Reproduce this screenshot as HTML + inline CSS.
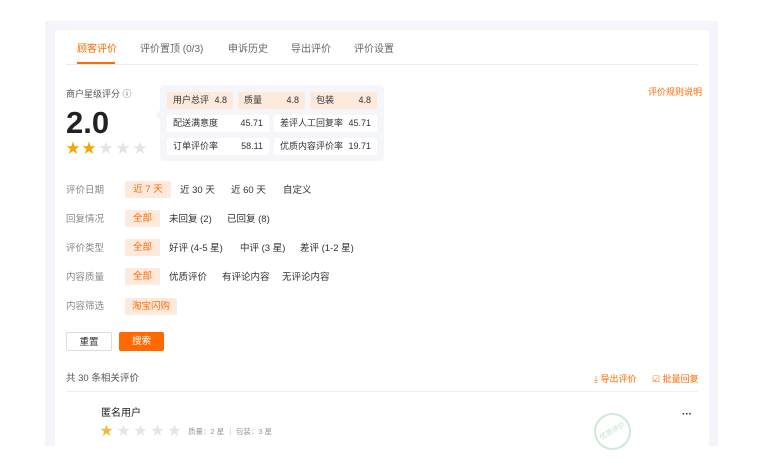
<!DOCTYPE html>
<html><head><meta charset="utf-8"><style>
*{margin:0;padding:0;box-sizing:border-box}
body{width:760px;height:468px;background:#fff;font-family:"Liberation Sans","Noto Sans CJK SC",sans-serif;position:relative;overflow:hidden;color:#333}
.abs{position:absolute}
.outer{left:45px;top:21px;width:673px;height:425px;background:#f4f5fa}
.card{left:55px;top:30px;width:654px;height:416px;background:#fff;border-radius:4px 4px 0 0}
.t{position:absolute;font-size:10px;line-height:12px;white-space:nowrap}
.chip{position:absolute;height:17px;border-radius:2px;font-size:9.5px;line-height:17px;text-align:center;white-space:nowrap}
.on{background:#fdeadd;color:#ff6a00}
.lbl{color:#888;font-size:9.5px}
.cell{position:absolute;height:17px;border-radius:2px;font-size:9px;line-height:17px;padding:0 6px;display:flex;justify-content:space-between;color:#333}
.star{position:absolute;font-size:14px;line-height:14px}
</style></head><body>
<div class="abs outer"></div>
<div class="abs card"></div>
<!-- tabs -->
<div class="t" style="left:77px;top:44px;color:#ff6a00">顾客评价</div>
<div class="abs" style="left:77px;top:62px;width:38px;height:2px;background:#ff6a00"></div>
<div class="t" style="left:140px;top:44px;color:#666">评价置顶 (0/3)</div>
<div class="t" style="left:228px;top:44px;color:#666">申诉历史</div>
<div class="t" style="left:291px;top:44px;color:#666">导出评价</div>
<div class="t" style="left:354px;top:44px;color:#666">评价设置</div>
<div class="abs" style="left:66px;top:64px;width:632px;height:1px;background:#ebebeb"></div>
<div class="t" style="left:648px;top:86px;color:#ff6a00;font-size:9px">评价规则说明</div>
<!-- score -->
<div class="t" style="left:66px;top:88px;color:#555;font-size:9px">商户星级评分 ⓘ</div>
<div class="t" style="left:66px;top:106px;font-size:31px;line-height:34px;font-weight:bold;color:#222">2.0</div>
<div class="star" style="left:66px;top:141px;color:#f7a500">★</div>
<div class="star" style="left:82px;top:141px;color:#f7a500">★</div>
<div class="star" style="left:99px;top:141px;color:#e3e4e8">★</div>
<div class="star" style="left:116px;top:141px;color:#e3e4e8">★</div>
<div class="star" style="left:133px;top:141px;color:#e3e4e8">★</div>
<!-- popover -->
<div class="abs" style="left:160px;top:85px;width:224px;height:76px;background:#f5f6fa;border-radius:4px"></div>
<div class="abs" style="left:155px;top:110px;width:0;height:0;border:5px solid transparent;border-right-color:#f5f6fa;border-left:0"></div>
<div class="cell" style="left:167px;top:92px;width:66px;background:#fdeadd"><span>用户总评</span><span>4.8</span></div>
<div class="cell" style="left:238px;top:92px;width:67px;background:#fdeadd"><span>质量</span><span>4.8</span></div>
<div class="cell" style="left:310px;top:92px;width:67px;background:#fdeadd"><span>包装</span><span>4.8</span></div>
<div class="cell" style="left:167px;top:115px;width:102px;background:#fff"><span>配送满意度</span><span>45.71</span></div>
<div class="cell" style="left:274px;top:115px;width:103px;background:#fff"><span>差评人工回复率</span><span>45.71</span></div>
<div class="cell" style="left:167px;top:138px;width:102px;background:#fff"><span>订单评价率</span><span>58.11</span></div>
<div class="cell" style="left:274px;top:138px;width:103px;background:#fff"><span>优质内容评价率</span><span>19.71</span></div>
<!-- filters -->
<div class="t lbl" style="left:66px;top:185px">评价日期</div>
<div class="chip on" style="left:125px;top:181px;width:46px">近 7 天</div>
<div class="t" style="left:180px;top:185px;font-size:9.5px">近 30 天</div>
<div class="t" style="left:231px;top:185px;font-size:9.5px">近 60 天</div>
<div class="t" style="left:283px;top:185px;font-size:9.5px">自定义</div>

<div class="t lbl" style="left:66px;top:214px">回复情况</div>
<div class="chip on" style="left:125px;top:210px;width:35px">全部</div>
<div class="t" style="left:169px;top:214px;font-size:9.5px">未回复 (2)</div>
<div class="t" style="left:227px;top:214px;font-size:9.5px">已回复 (8)</div>

<div class="t lbl" style="left:66px;top:243px">评价类型</div>
<div class="chip on" style="left:125px;top:239px;width:35px">全部</div>
<div class="t" style="left:169px;top:243px;font-size:9.5px">好评 (4-5 星)</div>
<div class="t" style="left:240px;top:243px;font-size:9.5px">中评 (3 星)</div>
<div class="t" style="left:300px;top:243px;font-size:9.5px">差评 (1-2 星)</div>

<div class="t lbl" style="left:66px;top:272px">内容质量</div>
<div class="chip on" style="left:125px;top:268px;width:35px">全部</div>
<div class="t" style="left:169px;top:272px;font-size:9.5px">优质评价</div>
<div class="t" style="left:222px;top:272px;font-size:9.5px">有评论内容</div>
<div class="t" style="left:282px;top:272px;font-size:9.5px">无评论内容</div>

<div class="t lbl" style="left:66px;top:301px">内容筛选</div>
<div class="chip on" style="left:125px;top:298px;width:52px">淘宝闪购</div>

<div class="chip" style="left:66px;top:332px;width:46px;height:19px;line-height:19px;border:1px solid #ddd;color:#333">重置</div>
<div class="chip" style="left:119px;top:332px;width:45px;height:19px;line-height:19px;background:#ff6a00;color:#fff">搜索</div>

<div class="t" style="left:66px;top:373px;color:#555;font-size:9.5px">共 30 条相关评价</div>
<div class="t" style="left:594px;top:373px;color:#ff6a00;font-size:9px">⤓ 导出评价</div>
<div class="t" style="left:652px;top:373px;color:#ff6a00;font-size:9px">☑ 批量回复</div>
<div class="abs" style="left:66px;top:391px;width:632px;height:1px;background:#f0f0f0"></div>

<div class="t" style="left:101px;top:408px;color:#222">匿名用户</div>
<div class="star" style="left:100px;top:424px;font-size:13px;color:#f2b93b">★</div>
<div class="star" style="left:117px;top:424px;font-size:13px;color:#e3e4e8">★</div>
<div class="star" style="left:134px;top:424px;font-size:13px;color:#e3e4e8">★</div>
<div class="star" style="left:151px;top:424px;font-size:13px;color:#e3e4e8">★</div>
<div class="star" style="left:168px;top:424px;font-size:13px;color:#e3e4e8">★</div>
<div class="t" style="left:188px;top:426px;color:#999;font-size:7.5px">质量：2 星 ｜ 包装：3 星</div>
<div class="abs" style="left:594px;top:413px;width:37px;height:37px;border-radius:50%;border:2px solid #cdebd6"></div>
<div class="t" style="left:599px;top:426px;color:#bfe4c9;font-size:7px;transform:rotate(-30deg)">优质评价</div>
<div class="t" style="left:682px;top:409px;font-weight:bold;color:#222">···</div>
</body></html>
